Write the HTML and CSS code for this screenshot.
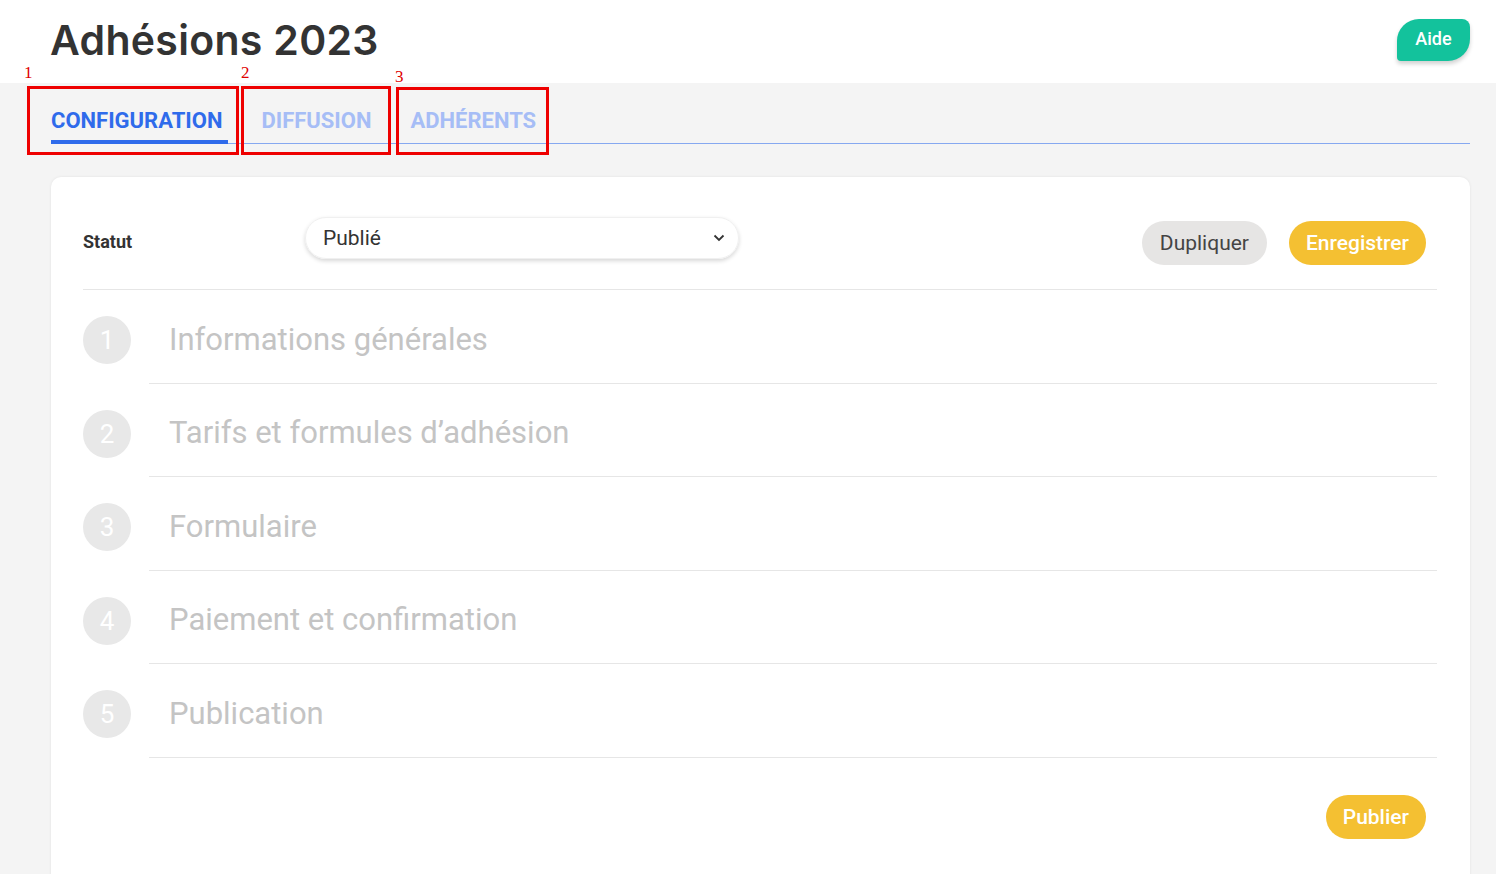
FILE: index.html
```html
<!DOCTYPE html>
<html lang="fr">
<head>
	<meta charset="UTF-8">
	<meta name="viewport" content="width=device-width, initial-scale=1.0">
	<title>Adhésions 2023</title>
	<link rel="stylesheet" href="styles.css">
</head>
<body>

	<header class="top">
		<h1 class="title">Adhésions 2023</h1>
		<button class="help">Aide</button>
	</header>

	<nav class="tabs-wrap">
		<div class="tabs">
			<a class="tab active">Configuration</a>
			<a class="tab">Diffusion</a>
			<a class="tab">Adhérents</a>
		</div>
	</nav>

	<main class="card">
		<div class="toolbar">
			<span class="label">Statut</span>
			<div class="select">
				<span>Publié</span>
				<svg width="12" height="8" viewBox="0 0 12 8"><path d="M1.5 1.5 6 6l4.5-4.5" fill="none" stroke="#333" stroke-width="1.8"/></svg>
			</div>
			<div class="actions">
				<button class="btn grey">Dupliquer</button>
				<button class="btn yellow">Enregistrer</button>
			</div>
		</div>

		<ol class="steps">
			<li class="step"><span class="num">1</span><div class="step-title">Informations générales</div></li>
			<li class="step"><span class="num">2</span><div class="step-title">Tarifs et formules d’adhésion</div></li>
			<li class="step"><span class="num">3</span><div class="step-title">Formulaire</div></li>
			<li class="step"><span class="num">4</span><div class="step-title">Paiement et confirmation</div></li>
			<li class="step"><span class="num">5</span><div class="step-title">Publication</div></li>
		</ol>

		<div class="footer">
			<button class="btn yellow">Publier</button>
		</div>
	</main>

	<!-- annotations -->
	<span class="note n1">1</span>
	<span class="note n2">2</span>
	<span class="note n3">3</span>
	<div class="mark m1"></div>
	<div class="mark m2"></div>
	<div class="mark m3"></div>

</body>
</html>
```

FILE: styles.css
```css
* {
	margin: 0;
	padding: 0;
	box-sizing: border-box;
}

body {
	background-color: #f4f4f4;
	font-family: "Roboto", "Liberation Sans", sans-serif;
	color: #333;
	overflow: hidden;
	height: 874px;
}

button {
	font-family: inherit;
	border: none;
	cursor: pointer;
}

/* header */

.top {
	height: 83px;
	background-color: #fff;
	display: flex;
	align-items: center;
	justify-content: space-between;
	padding: 0 26px 0 50px;
}

.title {
	font-family: "Inter", "Liberation Sans", sans-serif;
	font-weight: 600;
	font-size: 41px;
	letter-spacing: 0.3px;
	color: #333;
	margin-top: -4px;
}

.help {
	width: 73px;
	height: 42px;
	margin-top: -3px;
	background-color: #13c29c;
	color: #fff;
	font-size: 18px;
	font-weight: 500;
	border-radius: 22px 8px 22px 4px;
	box-shadow: 0 3px 4px rgba(0, 0, 0, .18);
	padding-bottom: 3px;
}

/* tabs */

.tabs-wrap {
	padding: 0 26px 0 51px;
}

.tabs {
	display: flex;
	gap: 33px;
	border-bottom: 1px solid #86a8f0;
	padding-top: 26px;
}

.tab {
	font-size: 22px;
	font-weight: 700;
	text-transform: uppercase;
	color: #a6bdf6;
	padding: 0 6px 7px 0;
	line-height: 24px;
	border-bottom: 4px solid transparent;
	margin-bottom: -1px;
}

.tab.active {
	color: #2f6beb;
	border-bottom-color: #2f6beb;
}

/* card */

.card {
	margin: 33px 26px 0 51px;
	background-color: #fff;
	border-radius: 10px;
	box-shadow: 0 0 3px rgba(0, 0, 0, .08);
	padding: 35px 33px 0 32px;
	height: 740px;
}

.toolbar {
	display: flex;
	align-items: center;
	padding: 4px 11px 21px 0;
	border-bottom: 1px solid #e6e6e6;
	height: 78px;
}

.label {
	width: 222px;
	font-size: 18px;
	font-weight: 700;
	color: #333;
	margin-top: -1px;
}

.select {
	width: 434px;
	height: 42px;
	border-radius: 21px;
	border: 1px solid #f0f0f0;
	box-shadow: 0 2px 4px rgba(0, 0, 0, .16);
	display: flex;
	align-items: center;
	justify-content: space-between;
	padding: 0 13px 0 17px;
	font-size: 21px;
	color: #333;
	margin-top: -8px;
}

.actions {
	margin-left: auto;
	display: flex;
	gap: 22px;
	margin-top: 1px;
}

.btn {
	height: 44px;
	border-radius: 22px;
	font-size: 21px;
	padding: 0 18px;
}

.btn.grey {
	background-color: #e6e5e4;
	color: #444;
}

.btn.yellow {
	background-color: #f4c032;
	color: #fff;
	font-weight: 500;
	padding: 0 17px;
}

/* steps */

.steps {
	list-style: none;
}

.step {
	display: flex;
	align-items: flex-start;
}

.num {
	width: 48px;
	height: 48px;
	border-radius: 50%;
	background-color: #e8e8e8;
	color: #fff;
	font-size: 26px;
	display: flex;
	align-items: center;
	justify-content: center;
	flex-shrink: 0;
	margin-top: 26px;
}

.step-title {
	flex: 1;
	margin-left: 18px;
	height: 93.5px;
	border-bottom: 1px solid #e6e6e6;
	display: flex;
	align-items: center;
	padding: 6px 0 0 20px;
	font-size: 31px;
	color: #c4c4c4;
}

.footer {
	display: flex;
	justify-content: flex-end;
	padding: 37px 11px 0 0;
}

/* annotations */

.note {
	position: absolute;
	font-family: "Liberation Serif", serif;
	font-size: 17px;
	color: #e00000;
}

.n1 { left: 24px; top: 63px; }
.n2 { left: 241px; top: 63px; }
.n3 { left: 395px; top: 67px; }

.mark {
	position: absolute;
	border: 3px solid #ee0000;
}

.m1 { left: 27px; top: 86px; width: 212px; height: 69px; }
.m2 { left: 241px; top: 86px; width: 150px; height: 69px; }
.m3 { left: 396px; top: 87px; width: 153px; height: 68px; }
```
